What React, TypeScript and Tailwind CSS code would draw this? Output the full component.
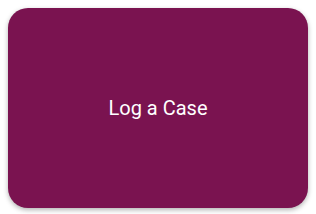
import React from 'react';

export default function App() {
  return (
    <div className="w-[316px] h-[214px] bg-white p-2" style={{ fontFamily: 'Roboto, "Liberation Sans", sans-serif' }}>
      <button className="w-[300px] h-[200px] rounded-[20px] bg-[#7a1350] text-white text-[20px] flex items-center justify-center shadow-[0_2px_5px_rgba(0,0,0,0.3)]">
        Log a Case
      </button>
    </div>
  );
}
